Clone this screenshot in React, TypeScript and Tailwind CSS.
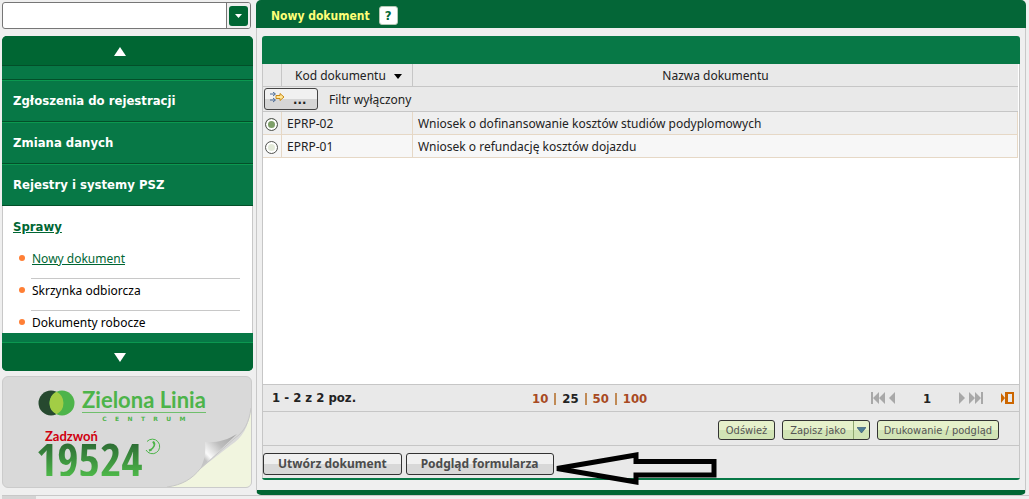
import { useState } from "react";

const menuItems = ["Zgłoszenia do rejestracji", "Zmiana danych", "Rejestry i systemy PSZ"];

const caseLinks = ["Nowy dokument", "Skrzynka odbiorcza", "Dokumenty robocze"];

const documents = [
  { code: "EPRP-02", name: "Wniosek o dofinansowanie kosztów studiów podyplomowych" },
  { code: "EPRP-01", name: "Wniosek o refundację kosztów dojazdu" },
];

const pageSizes = [10, 25, 50, 100];

const boldText = "font-['DejaVu_Sans_Condensed',sans-serif] font-bold";

function SearchBox() {
  return (
    <div className="flex h-[27px] mr-[2px] rounded-[3px] border border-[#767676] bg-white overflow-hidden">
      <input aria-label="Szukaj" className="flex-1 min-w-0 px-1 outline-none" />
      <button
        aria-label="Rozwiń"
        className="flex items-center justify-center w-6 border-l border-[#767676] bg-[#efefef]"
      >
        <span className="flex items-center justify-center w-[19px] h-5 rounded-[3px] bg-[#006633]">
          <svg width="7" height="4" viewBox="0 0 7 4" fill="#fff">
            <path d="M0 0h7L3.500 4z" />
          </svg>
        </span>
      </button>
    </div>
  );
}

function SideMenu() {
  return (
    <nav className="flex flex-col rounded-[5px] overflow-hidden bg-[#077846]">
      <button
        aria-label="Przewiń w górę"
        className="flex items-center justify-center h-[30px] pr-4 pt-[2px] bg-[#006633] border-b border-[#034f29]"
      >
        <svg width="12" height="9" viewBox="0 0 12 9" fill="#fff">
          <path d="M6 0l6 9H0z" />
        </svg>
      </button>
      <div className="h-[14px] border-b border-[#034f29]" />
      {menuItems.map((item) => (
        <a
          key={item}
          href="#"
          className={
            boldText +
            " flex items-center h-[42px] pl-[11px] border-t border-t-[#0b9850] border-b border-b-[#034f29] text-white text-[13px]"
          }
        >
          {item}
        </a>
      ))}
      <div className="h-[127px] overflow-hidden bg-white border-x border-[#c8c8c8] pl-[10px] pr-3">
        <a
          href="#"
          className={boldText + " flex items-center h-[42px] text-[13px] underline text-[#006633]"}
        >
          Sprawy
        </a>
        <ul>
          {caseLinks.map((link, i) => (
            <li key={link} className="flex items-start h-8">
              <span className="w-[6px] h-[6px] mt-[7px] ml-[6px] mr-[6px] rounded-full bg-[#ff7f35]" />
              <a
                href="#"
                className={
                  i === 0
                    ? "flex-1 h-[31px] pt-[3px] pl-[1px] border-b border-[#c8c8c8] text-[#006633] underline"
                    : "flex-1 h-[31px] pt-[3px] pl-[1px] border-b border-[#c8c8c8] text-black"
                }
              >
                {link}
              </a>
            </li>
          ))}
        </ul>
      </div>
      <div className="h-[9px]" />
      <button
        aria-label="Przewiń w dół"
        className="flex items-center justify-center h-[29px] pr-4 bg-[#006633] border-t border-[#0b9850]"
      >
        <svg width="12" height="9" viewBox="0 0 12 9" fill="#fff">
          <path d="M0 0h12L6 9z" />
        </svg>
      </button>
    </nav>
  );
}

function HelplineBanner() {
  return (
    <div className="relative h-28 mt-[5px] mr-[1px] rounded-md overflow-hidden border border-[#cbcbcb] bg-[#d9d9d9]">
      <svg className="absolute right-0 bottom-0" width="84" height="84" viewBox="0 0 84 84">
        <defs>
          <linearGradient id="fold" x1="0.900" y1="0" x2="0.100" y2="0.700">
            <stop offset="0" stopColor="#a8a8a8" />
            <stop offset="0.450" stopColor="#bdbdbd" />
            <stop offset="0.850" stopColor="#fafafa" />
            <stop offset="1" stopColor="#c4c4c4" />
          </linearGradient>
        </defs>
        <path d="M84 5C82 24 75 35 64 42L33 66C25 76 15 82 0 84H84z" fill="#f1f5df" />
        <path d="M84 5C82 20 77 29 68 35L33 66C25 76 15 82 0 84" fill="none" stroke="#c6c6c6" />
        <path d="M38 39C50 40 60 37 70 31L33 66C38 57 39 48 38 39z" fill="url(#fold)" />
      </svg>
      <div className="relative flex items-start pt-[10px] pl-[35px]">
        <svg className="mt-[2px]" width="37" height="28" viewBox="0 0 37 28">
          <circle cx="13" cy="14" r="12.500" fill="#26492f" />
          <circle cx="24" cy="14" r="12.500" fill="#4db44a" />
          <path d="M18.500 2.800a12.500 12.500 0 0 1 0 22.400a12.500 12.500 0 0 1 0-22.400z" fill="#a2cd45" />
        </svg>
        <div className="ml-[7px] text-[#4db44a]">
          <div
            className="h-[26px] border-b border-[#6fbf6c] font-['Lato',sans-serif] font-bold text-[22px] leading-[26px] whitespace-nowrap"
          >
            Zielona Linia
          </div>
          <div className="pt-[2px] text-center text-[6px] leading-2 font-bold font-['DejaVu_Sans',sans-serif] whitespace-nowrap">
            C&nbsp;&nbsp;&nbsp; E&nbsp;&nbsp;&nbsp; N&nbsp;&nbsp;&nbsp; T&nbsp;&nbsp;&nbsp; R&nbsp;&nbsp;&nbsp; U&nbsp;&nbsp;&nbsp; M
          </div>
        </div>
      </div>
      <div className="relative pl-[42px] pt-[7px] font-['Lato',sans-serif] font-bold text-[13px] leading-3 text-[#d0000f]">
        Zadzwoń
      </div>
      <div className="relative flex pl-[33px]">
        <span className="font-['Open_Sans_Condensed','Noto_Sans_Condensed','Roboto_Condensed',sans-serif] font-bold text-[46px] leading-[34px] bg-gradient-to-b from-[#2c6a34] to-[#4db848] bg-clip-text text-transparent">
          19524
        </span>
        <svg className="-mt-1 ml-[2px]" width="17" height="17" viewBox="0 0 17 17" fill="none" stroke="#4db44a">
          <path d="M3 3.500A7.300 7.300 0 1 1 2 12" strokeWidth="1" />
          <path d="M9.500 4c2 2 1 6-4 8.500" strokeWidth="1.600" />
          <path d="M9 3.500l1.500 2.500M5 12.500l2.500-.8" strokeWidth="2" />
        </svg>
      </div>
    </div>
  );
}

function DocumentTable() {
  const [selected, setSelected] = useState("EPRP-02");

  return (
    <table className="w-full table-fixed border-separate border-spacing-0 text-[#222]">
      <colgroup>
        <col className="w-[19px]" />
        <col className="w-[131px]" />
        <col />
      </colgroup>
      <thead className="bg-[#e9e9e9]">
        <tr className="h-[23px]">
          <th className="border-r border-b border-[#c6c6c6]" />
          <th className="border-r border-b border-[#c6c6c6] font-normal p-0 pt-[2px]">
            <button className="flex items-center pl-[13px] whitespace-nowrap">
              Kod dokumentu
              <svg className="ml-2" width="8" height="5" viewBox="0 0 8 5">
                <path d="M0 0h8L4 5z" />
              </svg>
            </button>
          </th>
          <th className="border-b border-[#c6c6c6] font-normal p-0 pt-[2px]">Nazwa dokumentu</th>
        </tr>
        <tr className="h-[25px]">
          <td colSpan={3} className="border-b border-[#c6c6c6] p-0">
            <div className="flex items-center pl-[1px]">
              <button
                aria-label="Filtr"
                className="flex items-start w-[54px] h-[22px] pl-[5px] pt-[3px] rounded-[3px] border border-[#444] bg-linear-to-b from-[#f1f1f1] from-50% to-[#d6d6d6] to-50% font-bold"
              >
                <svg width="15" height="11" viewBox="0 0 15 11" fill="none">
                  <path d="M0 2h5M0 8h5M3 0l2.500 2L3 4M3 6l2.500 2L3 10" stroke="#4a6b96" />
                  <path d="M6 3.500h4V1.500l4 3.500l-4 3.500V6.500H6z" fill="#ffe79a" stroke="#c98a18" />
                </svg>
                <span className={boldText + " ml-2 text-[13px]"}>...</span>
              </button>
              <span className="ml-[11px] pt-[2px]">Filtr wyłączony</span>
            </div>
          </td>
        </tr>
      </thead>
      <tbody>
        {documents.map(({ code, name }) => (
          <tr key={code} className="h-[23px] odd:bg-[#efefef] even:bg-[#f7f7f7]">
            <td className="border-r border-b border-[#e6d8c6] p-0">
              <input
                type="radio"
                name="document"
                id={code}
                checked={selected === code}
                onChange={() => setSelected(code)}
                className="block appearance-none w-[13px] h-[13px] mt-[2px] ml-[2px] rounded-full border border-[#555] bg-[#e3ead9] shadow-[inset_0_0_0_2px_#fff] checked:bg-[#7d9f68]"
              />
            </td>
            <td className="border-r border-b border-[#e6d8c6] p-0 pt-[2px] pl-[5px]">
              <label htmlFor={code}>{code}</label>
            </td>
            <td className="border-r border-b border-[#e6d8c6] p-0 pt-[2px] pl-[5px]">{name}</td>
          </tr>
        ))}
      </tbody>
    </table>
  );
}

function Pager() {
  return (
    <div
      className={
        boldText +
        " flex items-center h-7 border-y border-[#c6c6c6] bg-[#e9e9e9] text-[13px] text-[#222]"
      }
    >
      <span className="w-[269px] pl-[9px]">1 - 2 z 2 poz.</span>
      <div className="flex-1 flex items-center gap-[6px] pt-[1px] text-[#a84a22]">
        {pageSizes.map((size, i) => (
          <span key={size} className="flex items-center gap-[6px]">
            {i > 0 && <span className="w-[2px] h-3 bg-[#c08a55]" />}
            {size === 25 ? <span className="text-[#222]">{size}</span> : <a href="#">{size}</a>}
          </span>
        ))}
      </div>
      <div className="flex items-center pr-[5px]">
        <button aria-label="Pierwsza strona">
          <svg width="15" height="12" viewBox="0 0 15 12" fill="#a8a8a8">
            <path d="M0 0h2v12H0zM8 0v12L2 6zM14 0v12L8 6z" />
          </svg>
        </button>
        <button aria-label="Poprzednia strona" className="ml-[3px]">
          <svg width="6" height="12" viewBox="0 0 6 12" fill="#a8a8a8">
            <path d="M6 0v12L0 6z" />
          </svg>
        </button>
        <span className="w-[64px] pt-[1px] text-center">1</span>
        <button aria-label="Następna strona">
          <svg width="6" height="12" viewBox="0 0 6 12" fill="#a8a8a8">
            <path d="M0 0v12l6-6z" />
          </svg>
        </button>
        <button aria-label="Ostatnia strona" className="ml-1">
          <svg width="15" height="12" viewBox="0 0 15 12" fill="#a8a8a8">
            <path d="M0 0v12l6-6zM6 0v12l6-6zM12 0h2v12h-2z" />
          </svg>
        </button>
        <button aria-label="Idź do strony" className="ml-[17px]">
          <svg width="13" height="12" viewBox="0 0 13 12" fill="#cc6600">
            <path d="M0 1v10l4-5zM4 0h2v12H4z" />
            <path d="M6 0h7v12H6zM7 2v8h4V2z" fillRule="evenodd" />
          </svg>
        </button>
      </div>
    </div>
  );
}

const softButton =
  "h-5 rounded-[3px] border border-[#333] bg-linear-to-b from-[#e6f1cb] from-50% to-[#d1e4b5] to-50% font-['DejaVu_Sans_Condensed',sans-serif] text-[11px] leading-[19px] text-[#555] whitespace-nowrap";

const mainButton =
  "h-[22px] px-[14px] rounded-[3px] border border-[#333] bg-linear-to-b from-[#f0f0f0] from-50% to-[#d8d8d8] to-50% font-bold text-[#4c4c4c] whitespace-nowrap";

function Actions() {
  return (
    <div className="flex items-center justify-end gap-[7px] h-[34px] pt-[3px] pr-5 border-b border-[#c6c6c6] bg-[#e9e9e9]">
      <button className={softButton + " px-[7px]"}>Odśwież</button>
      <div className={softButton + " flex overflow-hidden"}>
        <button className="px-[7px]">Zapisz jako</button>
        <button aria-label="Wybierz format" className="px-[3px] border-l border-[#8fa870]">
          <svg width="9" height="6" viewBox="0 0 9 6">
            <path d="M0 .5h9L4.500 6z" fill="#4d7f94" stroke="#2d4a70" strokeWidth=".6" />
          </svg>
        </button>
      </div>
      <button className={softButton + " px-[6px]"}>Drukowanie / podgląd</button>
    </div>
  );
}

export default function App() {
  return (
    <div className="flex flex-col min-h-screen bg-[#efefef] font-['Noto_Sans',sans-serif] text-[12px] leading-4">
      <div className="flex-1 flex">
        <aside className="w-[251px] shrink-0 ml-[2px] pt-[2px]">
          <SearchBox />
          <div className="mt-[7px]">
            <SideMenu />
          </div>
          <HelplineBanner />
        </aside>

        <main className="flex-1 flex flex-col min-w-0 ml-[3px] mr-[3px]">
          <header className="flex items-center h-7 pl-[15px] pt-[3px] rounded-t-[5px] bg-[#046637]">
            <h1 className={boldText + " text-[#ffff77]"}>Nowy dokument</h1>
            <button
              aria-label="Pomoc"
              className={
                boldText +
                " w-[19px] h-[19px] ml-[9px] rounded-[3px] border border-[#b5c9b5] bg-white text-[13px] text-[#046637]"
              }
            >
              ?
            </button>
          </header>
          <div className="flex-1 flex flex-col px-[5px] pt-2 pb-[10px] border-x border-[#c8c8c8] border-b-[5px] border-b-[#006633] rounded-b-[5px]">
            <section className="flex-1 flex flex-col rounded-b-[3px] border-b-2 border-[#077846]">
              <div className="h-7 rounded-t-[3px] bg-[#077846]" />
              <div className="flex-1 flex flex-col border-x border-[#c6c6c6]">
                <div className="flex-1 bg-white pr-[1px]">
                  <DocumentTable />
                </div>
                <Pager />
                <Actions />
                <div className="flex items-center gap-1 h-8 pb-[1px] pt-[5px] bg-[#e9e9e9]">
                  <button className={mainButton}>Utwórz dokument</button>
                  <button className={mainButton}>Podgląd formularza</button>
                  <div className="relative w-0 self-start">
                    <svg
                      className="absolute left-[-4px] top-0"
                      width="163"
                      height="35"
                      viewBox="0 0 163 35"
                      fill="none"
                      stroke="#000"
                      strokeWidth="5"
                    >
                      <path d="M3 17.500L82 4v6.500h78V24H82v7z" />
                    </svg>
                  </div>
                </div>
              </div>
            </section>
          </div>
        </main>
      </div>
      <footer className="h-1 ml-[2px]">
        <div className="h-[1px] bg-[#c8c8c8]" />
        <div className="w-[34px] h-[3px] bg-[#d4d4d4]" />
      </footer>
    </div>
  );
}
